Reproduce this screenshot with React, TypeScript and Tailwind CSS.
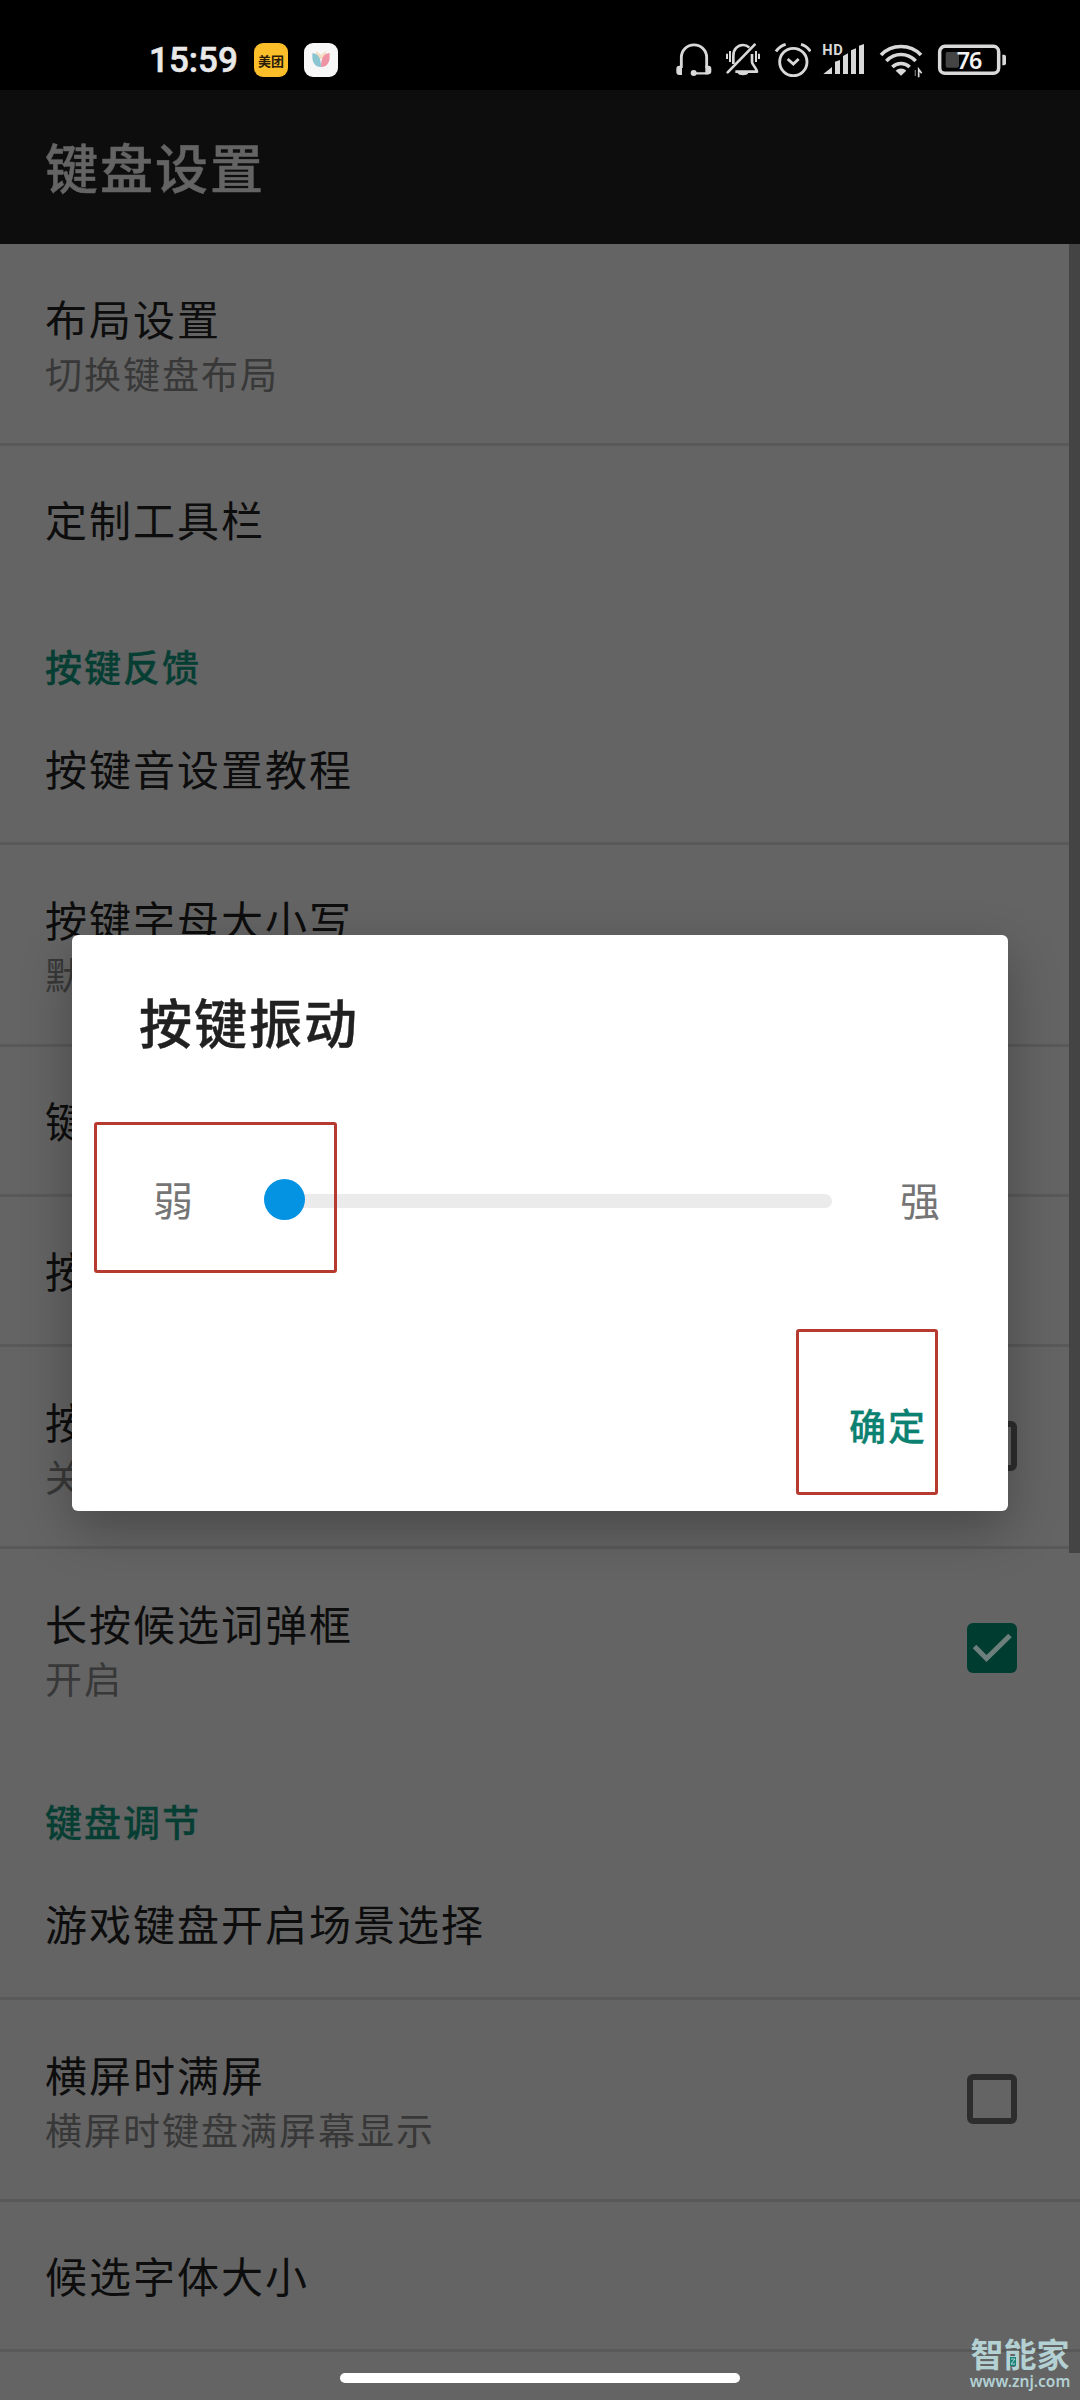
import clsx from 'clsx';

type Entry =
  | { kind: 'category'; title: string }
  | { kind: 'item'; title: string; desc?: string; checked?: boolean; last?: boolean };

const entries: Entry[] = [
  { kind: 'item', title: '布局设置', desc: '切换键盘布局' },
  { kind: 'item', title: '定制工具栏', last: true },
  { kind: 'category', title: '按键反馈' },
  { kind: 'item', title: '按键音设置教程' },
  { kind: 'item', title: '按键字母大小写', desc: '默认' },
  { kind: 'item', title: '键' },
  { kind: 'item', title: '按' },
  { kind: 'item', title: '按', desc: '关', checked: false },
  { kind: 'item', title: '长按候选词弹框', desc: '开启', checked: true, last: true },
  { kind: 'category', title: '键盘调节' },
  { kind: 'item', title: '游戏键盘开启场景选择' },
  { kind: 'item', title: '横屏时满屏', desc: '横屏时键盘满屏幕显示', checked: false },
  { kind: 'item', title: '候选字体大小' },
];

function StatusIcons() {
  return (
    <div className="flex items-center text-[#d9d9d9]">
      <svg className="w-[38px] h-9" viewBox="0 0 114 108" fill="none" stroke="currentColor" strokeWidth="8.5">
        <path d="M19 78V46.500a38 38 0 0 1 76 0V78" />
        <path d="M55 94H97V84" strokeWidth="7" />
        <path d="M21 71v28h-8a9 9 0 0 1-9-9V80a9 9 0 0 1 9-9zM91 71v26h9a9 9 0 0 0 9-9V80a9 9 0 0 0-9-9z" fill="currentColor" stroke="none" />
        <circle cx="56" cy="93" r="9" fill="currentColor" stroke="none" />
      </svg>
      <svg className="w-9 h-9 ml-3" viewBox="0 0 108 108" fill="none" stroke="currentColor" strokeWidth="8">
        <path d="M25 66V41C25 22 38 9 54 9c8 0 14 3 19 8M81 36V60c0 8 14 18 15 29H31" strokeLinejoin="round" />
        <path d="M8 91L89 8" strokeWidth="8" strokeLinecap="round" />
        <path d="M38 93h32c-3 9-29 9-32 0z" fill="currentColor" stroke="none" />
        <path d="M6 35v16M15 27v33M93 27v33M102 35v16" strokeWidth="6" />
      </svg>
      <svg className="w-9 h-9 ml-[14px]" viewBox="0 0 108 108" fill="none" stroke="currentColor" strokeWidth="8.5">
        <circle cx="55" cy="60" r="41" />
        <path d="M3 28Q14 12 32 7M78 7Q96 12 106 28" />
        <path d="M38 51l17 15 16-15" />
      </svg>
      <svg className="w-[43px] h-9 ml-[11px]" viewBox="0 0 129 108" fill="currentColor">
        <path d="M4 96l26-21v21zM39 59l15-5v42H39zM63 42l15-8v62H63zM87 25l15-6v77H87zM111 11l15-5v90h-15z" />
        <text x="1" y="38" fontSize="44" fontWeight="700" letterSpacing="2" fontFamily="Roboto, sans-serif">HD</text>
      </svg>
      <svg className="w-11 h-9 ml-[14px]" viewBox="0 0 132 108" fill="none" stroke="currentColor" strokeWidth="11">
        <path d="M6 39C38 5 94 5 126 39" />
        <path d="M22 57C47 31 85 31 110 57" />
        <path d="M40 75c15-14 37-14 52 0" />
        <path d="M50 86c9-9 23-9 32 0L66 101z" fill="currentColor" stroke="none" />
        <path d="M109 84v18" strokeWidth="4" opacity="0.5" />
        <path d="M119 106V82l9 12" strokeWidth="5" />
      </svg>
      <svg className="w-[70px] h-9 ml-[14px]" viewBox="0 0 210 108">
        <rect x="26" y="30" width="40" height="47" rx="5" fill="#444444" />
        <rect x="8" y="13" width="177" height="81" rx="16" fill="none" stroke="currentColor" strokeWidth="10.5" />
        <path d="M196 38h5q6 0 6 6v20q0 6-6 6h-5z" fill="currentColor" />
        <text x="59" y="80" fontSize="70" fontWeight="600" letterSpacing="-3" fill="#f2f2f2" fontFamily="'Noto Sans', sans-serif">76</text>
      </svg>
    </div>
  );
}

function StatusBar() {
  return (
    <div className="h-[90px] bg-black pt-[30px] pl-[149px] pr-[73px] flex items-center justify-between">
      <div className="flex items-center">
        <span className="w-[105px] mt-0.5 font-[Roboto] font-medium text-[35px] leading-9 text-[#e9e9e9] whitespace-nowrap [-webkit-text-stroke:0.6px_#e9e9e9]">15:59</span>
        <span className="size-[34px] rounded-[9px] bg-[#fcbf2a] flex items-center justify-center text-[13px] leading-none font-bold text-[#2a1b06]">美团</span>
        <span className="size-[34px] ml-4 rounded-[9px] bg-[#f7f7f7] flex items-center justify-center">
          <svg className="size-[34px]" viewBox="0 0 34 34">
            <path d="M12 8l5 4 5-4v8H12z" fill="#f5dcc4" />
            <path d="M8.500 10c6 1 8.500 5 8.500 14C10 24 7.500 18 8.500 10z" fill="#8ac6d2" />
            <path d="M25.500 10c-6 1-8.500 5-8.500 14 7 0 9.500-6 8.500-14z" fill="#ee93a4" />
          </svg>
        </span>
      </div>
      <StatusIcons />
    </div>
  );
}

function Checkbox({ checked }: { checked: boolean }) {
  if (!checked) {
    return <span className="size-[50px] -mt-0.5 rounded-md border-[6px] border-[#2d2d2d]" />;
  }
  return (
    <span className="size-[50px] -mt-0.5 rounded-md bg-[#003c30]">
      <svg viewBox="0 0 50 50" fill="none" stroke="#6c7f7b" strokeWidth="5">
        <path d="M7.500 23.500L19.500 35.500L43 12.500" />
      </svg>
    </span>
  );
}

function SettingRow({ title, desc, checked, last }: { title: string; desc?: string; checked?: boolean; last?: boolean }) {
  return (
    <div
      className={clsx(
        'shrink-0 pl-[45px] pr-[63px] flex items-center justify-between border-b-[3px]',
        desc ? 'h-[202px]' : 'h-[150px] pb-[2px]',
        last ? 'border-transparent' : 'border-[#595959]',
      )}
    >
      <div className={clsx('whitespace-nowrap', desc && 'pt-[3px]')}>
        <div className="text-[42px] leading-[56px] tracking-[2px] text-[#0d0d0d]">{title}</div>
        {desc && <div className="text-[37px] leading-[55px] tracking-[2px] text-[#383838]">{desc}</div>}
      </div>
      {checked !== undefined && <Checkbox checked={checked} />}
    </div>
  );
}

function VibrationDialog() {
  return (
    <div className="absolute left-[72px] top-[935px] w-[936px] h-[576px] rounded-md bg-white shadow-[0_18px_50px_rgba(0,0,0,0.28)] flex flex-col">
      <h2 className="mt-[48px] ml-[67px] text-[53px] leading-[76px] tracking-[2px] font-medium text-[#212121] [-webkit-text-stroke:0.4px_#212121]">按键振动</h2>

      <div className="mt-[101px] ml-[81px] mr-[68px] h-[82px] flex items-center justify-between text-[40px] leading-[60px] text-[#757575]">
        <span className="-mt-[5px]">弱</span>
        <div className="ml-[71px] mr-[68px] flex-1 flex items-center">
          <span className="z-10 -mt-[3px] size-[41px] shrink-0 rounded-full bg-[#0492e2]" />
          <span className="-ml-2 h-[14px] flex-1 rounded-r-full bg-[#ebebeb]" />
        </div>
        <span className="-mt-[5px]">强</span>
      </div>

      <button className="mt-auto mb-[58px] mr-[81px] self-end text-[37px] leading-[56px] tracking-[2px] font-medium text-[#0b8171] [-webkit-text-stroke:0.3px_#0b8171]">确定</button>

      {/* highlighted steps */}
      <div className="absolute left-[22px] top-[187px] w-[243px] h-[151px] rounded-[3px] border-[3px] border-[#b73a31]" />
      <div className="absolute left-[724px] top-[394px] w-[142px] h-[166px] rounded-[3px] border-[3px] border-[#b73a31]" />
    </div>
  );
}

export default function App() {
  return (
    <div className="relative w-[1080px] h-[2400px] overflow-hidden flex flex-col bg-[#646464] font-['Noto_Sans_CJK_SC',sans-serif]">
      <StatusBar />
      <header className="h-[154px] shrink-0 bg-[#0d0d0d] pl-[45px] pb-0.5 flex items-center">
        <h1 className="text-[53px] leading-[76px] tracking-[2px] font-medium text-[#646464] [-webkit-text-stroke:0.5px_#646464]">键盘设置</h1>
      </header>

      <main className="flex flex-col">
        {entries.map((entry, i) =>
          entry.kind === 'category' ? (
            <div key={i} className="h-[99px] shrink-0 pl-[45px] pt-[42px] text-[37px] leading-[56px] tracking-[2px] font-medium text-[#063e33] [-webkit-text-stroke:0.3px_#063e33]">
              {entry.title}
            </div>
          ) : (
            <SettingRow key={i} title={entry.title} desc={entry.desc} checked={entry.checked} last={entry.last} />
          ),
        )}
      </main>

      {/* scroll thumb */}
      <div className="absolute right-0 top-[244px] w-[11px] h-[1309px] bg-[#444444]" />

      <VibrationDialog />

      <div className="absolute left-[340px] top-[2373px] w-[400px] h-[10px] rounded-full bg-white" />

      {/* site mark */}
      <div className="absolute left-[970px] top-[2335px] w-[100px] flex flex-col items-center text-[#b3d0d3] whitespace-nowrap">
        <span className="text-[33px] leading-9 font-bold">智能家</span>
        <span className="mt-px font-['Noto_Sans'] text-[15.5px] leading-[18px] font-semibold">www.znj.com</span>
        <svg className="absolute left-[40px] top-[22px] w-[6px] h-[9px]" viewBox="0 0 6 9">
          <rect width="6" height="9" fill="#16857b" />
          <path d="M1 2h4L1 7h4" fill="none" stroke="#b3d0d3" />
        </svg>
      </div>
    </div>
  );
}
